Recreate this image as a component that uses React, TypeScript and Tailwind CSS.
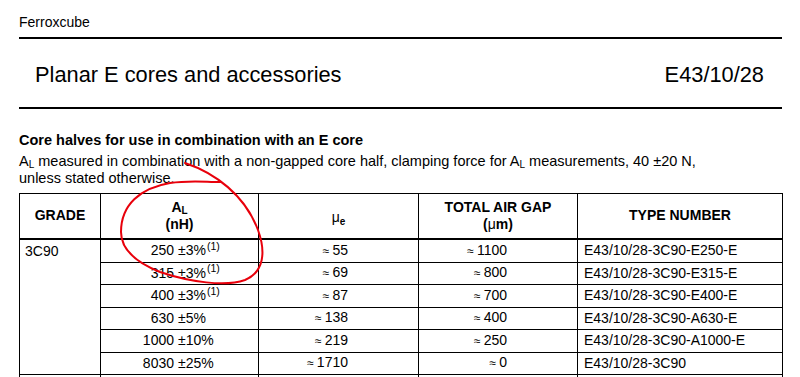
import React from "react";

interface CoreRow {
	al: string;
	tol: string;
	note: boolean;
	mu: string;
	gap: string;
	type: string;
}

const rows: CoreRow[] = [
	{ al: "250", tol: "±3%", note: true, mu: "55", gap: "1100", type: "E43/10/28-3C90-E250-E" },
	{ al: "315", tol: "±3%", note: true, mu: "69", gap: "800", type: "E43/10/28-3C90-E315-E" },
	{ al: "400", tol: "±3%", note: true, mu: "87", gap: "700", type: "E43/10/28-3C90-E400-E" },
	{ al: "630", tol: "±5%", note: false, mu: "138", gap: "400", type: "E43/10/28-3C90-A630-E" },
	{ al: "1000", tol: "±10%", note: false, mu: "219", gap: "250", type: "E43/10/28-3C90-A1000-E" },
	{ al: "8030", tol: "±25%", note: false, mu: "1710", gap: "0", type: "E43/10/28-3C90" },
];

function Approx({ value }: { value: string }) {
	return (
		<span>
			<span className="mr-[3px] text-[12px]">≈</span>
			{value}
		</span>
	);
}

export default function App() {
	return (
		<div className="relative min-h-screen bg-white text-black font-['Liberation_Sans',Arial,sans-serif]">
			<div className="ml-[19px] w-[763px] pt-[14px]">
				{/* page header */}
				<div className="text-[14px] leading-[16px]">Ferroxcube</div>
				<div className="mt-[7px] h-[2px] bg-black" />
				<div className="mt-[23px] flex items-baseline justify-between pl-[16px] pr-[18px] text-[21.8px] leading-[26px]">
					<h1>Planar E cores and accessories</h1>
					<span>E43/10/28</span>
				</div>
				<div className="mt-[19px] h-[2px] bg-black" />

				{/* section intro */}
				<h2 className="mt-[23px] text-[14.5px] font-bold leading-[17.5px]">
					Core halves for use in combination with an E core
				</h2>
				<p className="mt-[3px] text-[14.5px] leading-[17.5px]">
					A<sub className="text-[10px]">L</sub> measured in combination with a non-gapped core half,
					clamping force for A<sub className="text-[10px]">L</sub> measurements, 40 ±20 N,
					<br />
					unless stated otherwise.
				</p>

				{/* grade table */}
				<table className="mt-[5px] w-full table-fixed border-collapse border border-black text-[14px] leading-[17px]">
					<colgroup>
						<col className="w-[81px]" />
						<col className="w-[158px]" />
						<col className="w-[160px]" />
						<col className="w-[159px]" />
						<col className="w-[205px]" />
					</colgroup>
					<thead>
						<tr className="h-[46px] border-b-2 border-black">
							<th className="border border-black font-bold">GRADE</th>
							<th className="border border-black font-bold">
								A<sub className="text-[10px]">L</sub>
								<br />
								(nH)
							</th>
							<th className="border border-black pt-[4px] font-normal">
								μ<sub className="text-[10px] font-bold">e</sub>
							</th>
							<th className="border border-black font-bold">
								TOTAL AIR GAP
								<br />
								(<span className="font-normal">μ</span>m)
							</th>
							<th className="border border-black font-bold">TYPE NUMBER</th>
						</tr>
					</thead>
					<tbody>
						{rows.map((r, i) => (
							<tr key={r.type} className={i % 2 === 0 ? "h-[23px]" : "h-[22px]"}>
								{i === 0 && (
									<td rowSpan={rows.length} className="border border-black pl-[5px] pt-[3px] align-top">
										3C90
									</td>
								)}
								<td className="border border-black p-0">
									<div className="flex">
										<span className="w-[73px] text-right">{r.al}</span>
										<span className="ml-[4px]">
											{r.tol}
											{r.note && <sup className="ml-[1px] text-[10.5px]">(1)</sup>}
										</span>
									</div>
								</td>
								<td className="border border-black pr-[70px] text-right">
									<Approx value={r.mu} />
								</td>
								<td className="border border-black pr-[70px] text-right">
									<Approx value={r.gap} />
								</td>
								<td className="border border-black pl-[6px]">{r.type}</td>
							</tr>
						))}
						<tr className="h-[22px]">
							<td className="border border-black" />
							<td className="border border-black" />
							<td className="border border-black" />
							<td className="border border-black" />
							<td className="border border-black" />
						</tr>
					</tbody>
				</table>
			</div>

			{/* hand-drawn annotation */}
			<svg
				className="pointer-events-none absolute left-0 top-0"
				width="800"
				height="377"
				viewBox="0 0 800 377"
				fill="none"
			>
				<path
					d="M185,163 C215,173 245,195 258,230 C266,252 264,272 245,280 C225,287 190,282 160,272 C135,262 121,248 121,232 C121,205 140,188 170,183 C190,180 205,182 220,182"
					stroke="#e8000b"
					strokeWidth="2"
					strokeLinecap="round"
				/>
			</svg>
		</div>
	);
}
